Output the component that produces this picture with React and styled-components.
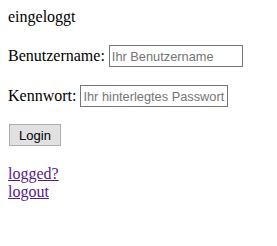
import React from "react";
import styled, { createGlobalStyle } from "styled-components";

const Global = createGlobalStyle`
  body {
    margin: 8px;
    font-family: "Liberation Serif", "Times New Roman", serif;
    font-size: 16px;
    color: #000;
    background: #fff;
  }
`;

const Status = styled.div`
  line-height: 18px;
`;

const Form = styled.form`
  margin: 0;
  padding-top: 2px;
`;

const Row = styled.p`
  margin: 16px 0;
  display: flex;
  align-items: center;
  gap: 4px;
  line-height: 24px;
`;

const Field = styled.input`
  box-sizing: border-box;
  width: ${(p) => p.$w}px;
  height: 22px;
  border: 1px solid #767676;
  padding: 1px 2px;
  font-family: "Liberation Sans", Tahoma, sans-serif;
  font-size: 12.8px;
  color: #000;
  background: #fff;
  &::placeholder {
    color: #757575;
  }
`;

const Button = styled.button`
  box-sizing: border-box;
  margin-left: 1px;
  width: 52px;
  height: 22px;
  border: 1px solid #adadad;
  background: #e1e1e1;
  font-family: "Liberation Sans", Tahoma, sans-serif;
  font-size: 13px;
  color: #000;
  padding: 0;
`;

const Links = styled.div`
  display: flex;
  flex-direction: column;
  line-height: 18px;
  padding-top: 3px;
`;

const Link = styled.a`
  color: #551a8b;
  text-decoration: underline;
  align-self: flex-start;
`;

export default function App() {
  return (
    <>
      <Global />
      <Status>eingeloggt</Status>
      <Form onSubmit={(e) => e.preventDefault()}>
        <Row>
          <span>Benutzername:</span>
          <Field $w={134} placeholder="Ihr Benutzername" />
        </Row>
        <Row>
          <span>Kennwort:</span>
          <Field $w={148} type="password" placeholder="Ihr hinterlegtes Passwort" />
        </Row>
        <Row>
          <Button type="submit">Login</Button>
        </Row>
      </Form>
      <Links>
        <Link href="#">logged?</Link>
        <Link href="#">logout</Link>
      </Links>
    </>
  );
}
